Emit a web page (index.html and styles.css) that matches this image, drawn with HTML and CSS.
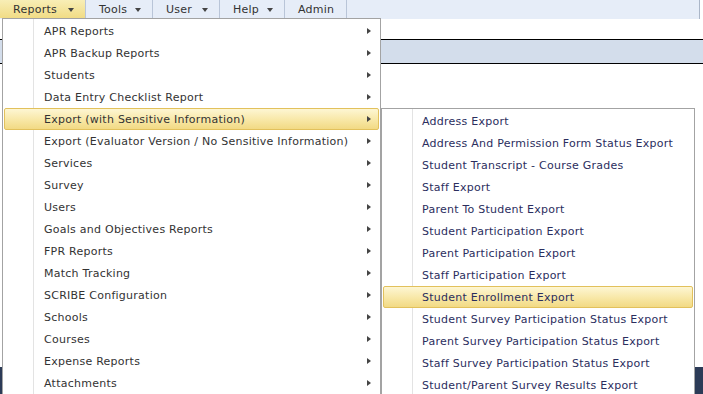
FILE: index.html
```html
<!DOCTYPE html>
<html lang="en">
<head>
    <meta charset="UTF-8">
    <title>Reports Menu</title>
    <link rel="stylesheet" href="styles.css">
</head>
<body>
    <div class="page">
        <ul class="menubar">
            <li class="bar-item active">Reports <span class="caret"></span></li>
            <li class="bar-item">Tools <span class="caret"></span></li>
            <li class="bar-item">User <span class="caret"></span></li>
            <li class="bar-item">Help <span class="caret"></span></li>
            <li class="bar-item">Admin</li>
        </ul>
        <div class="gap"></div>
        <div class="band"></div>
        <div class="content"></div>
        <div class="footer-left"></div>
        <div class="footer-right"></div>

        <!-- dropdown -->
        <ul class="menu main-menu">
            <li class="item sub">APR Reports</li>
            <li class="item sub">APR Backup Reports</li>
            <li class="item sub">Students</li>
            <li class="item sub">Data Entry Checklist Report</li>
            <li class="item sub hover">Export (with Sensitive Information)</li>
            <li class="item sub">Export (Evaluator Version / No Sensitive Information)</li>
            <li class="item sub">Services</li>
            <li class="item sub">Survey</li>
            <li class="item sub">Users</li>
            <li class="item sub">Goals and Objectives Reports</li>
            <li class="item sub">FPR Reports</li>
            <li class="item sub">Match Tracking</li>
            <li class="item sub">SCRIBE Configuration</li>
            <li class="item sub">Schools</li>
            <li class="item sub">Courses</li>
            <li class="item sub">Expense Reports</li>
            <li class="item sub">Attachments</li>
        </ul>

        <ul class="menu sub-menu">
            <li class="item">Address Export</li>
            <li class="item">Address And Permission Form Status Export</li>
            <li class="item">Student Transcript - Course Grades</li>
            <li class="item">Staff Export</li>
            <li class="item">Parent To Student Export</li>
            <li class="item">Student Participation Export</li>
            <li class="item">Parent Participation Export</li>
            <li class="item">Staff Participation Export</li>
            <li class="item hover">Student Enrollment Export</li>
            <li class="item">Student Survey Participation Status Export</li>
            <li class="item">Parent Survey Participation Status Export</li>
            <li class="item">Staff Survey Participation Status Export</li>
            <li class="item">Student/Parent Survey Results Export</li>
        </ul>
    </div>
</body>
</html>
```

FILE: styles.css
```css
* {
    margin: 0;
    padding: 0;
    box-sizing: border-box;
}

body {
    font-family: "DejaVu Sans", "Liberation Sans", sans-serif;
    font-size: 11px;
    letter-spacing: 0.25px;
    color: #333;
    background: #fff;
}

.page {
    position: relative;
    width: 703px;
    height: 394px;
    overflow: hidden;
}

ul {
    list-style: none;
}

/* top bar */
.menubar {
    display: flex;
    height: 19px;
    width: 700px;
    background: #e6edf8;
    border-right: 1px solid #aab6c8;
}

.bar-item {
    display: flex;
    align-items: center;
    justify-content: space-between;
    padding: 0 11px 0 13px;
    height: 18px;
    color: #333;
    border-right: 1px solid #b9c5d8;
}

.bar-item:nth-child(1) { width: 86px; }
.bar-item:nth-child(2) { width: 67px; }
.bar-item:nth-child(3) { width: 67px; }
.bar-item:nth-child(4) { width: 65px; }
.bar-item:nth-child(5) { width: 62px; }

.bar-item.active {
    background: linear-gradient(#f8eeb6, #f1dc85);
}

.caret {
    width: 0;
    height: 0;
    border-left: 3px solid transparent;
    border-right: 3px solid transparent;
    border-top: 4px solid #444;
    margin-top: 1px;
}

.gap {
    height: 20px;
}

.band {
    height: 25px;
    background: #d3ddeb;
    border-top: 1px solid #000;
    border-bottom: 1px solid #000;
}

.content {
    height: 300px;
}

.footer-left,
.footer-right {
    position: absolute;
    bottom: 0;
    height: 27px;
    background: #2c3b57;
}

.footer-left {
    left: 0;
    width: 3px;
}

.footer-right {
    right: 0;
    width: 8px;
}

/* dropdown menus */
.menu {
    position: absolute;
    background: #fff;
    border: 1px solid #a3a3a3;
    padding: 1px 0;
}

.main-menu {
    left: 2px;
    top: 18px;
    width: 379px;
    height: 390px;
    background: linear-gradient(to right, #fff 30px, #e3e3e3 30px, #e3e3e3 31px, #fff 31px);
}

.sub-menu {
    left: 381px;
    top: 108px;
    width: 314px;
    height: 300px;
    color: #2b2e5e;
    background: linear-gradient(to right, #fff 30px, #e3e3e3 30px, #e3e3e3 31px, #fff 31px);
}

.item {
    position: relative;
    display: flex;
    align-items: center;
    height: 22px;
    padding-left: 39px;
    margin: 0 1px;
    border: 1px solid transparent;
    white-space: nowrap;
}

.sub-menu .item {
    padding-left: 38px;
}

.item.hover {
    border-color: #e2c15c;
    border-radius: 2px;
    background: linear-gradient(#fdf6d3, #f7e6a2 60%, #f2da84);
}

.item.sub::after {
    content: "";
    position: absolute;
    right: 7px;
    top: 7px;
    border-top: 3.5px solid transparent;
    border-bottom: 3.5px solid transparent;
    border-left: 4px solid #444;
}
```
